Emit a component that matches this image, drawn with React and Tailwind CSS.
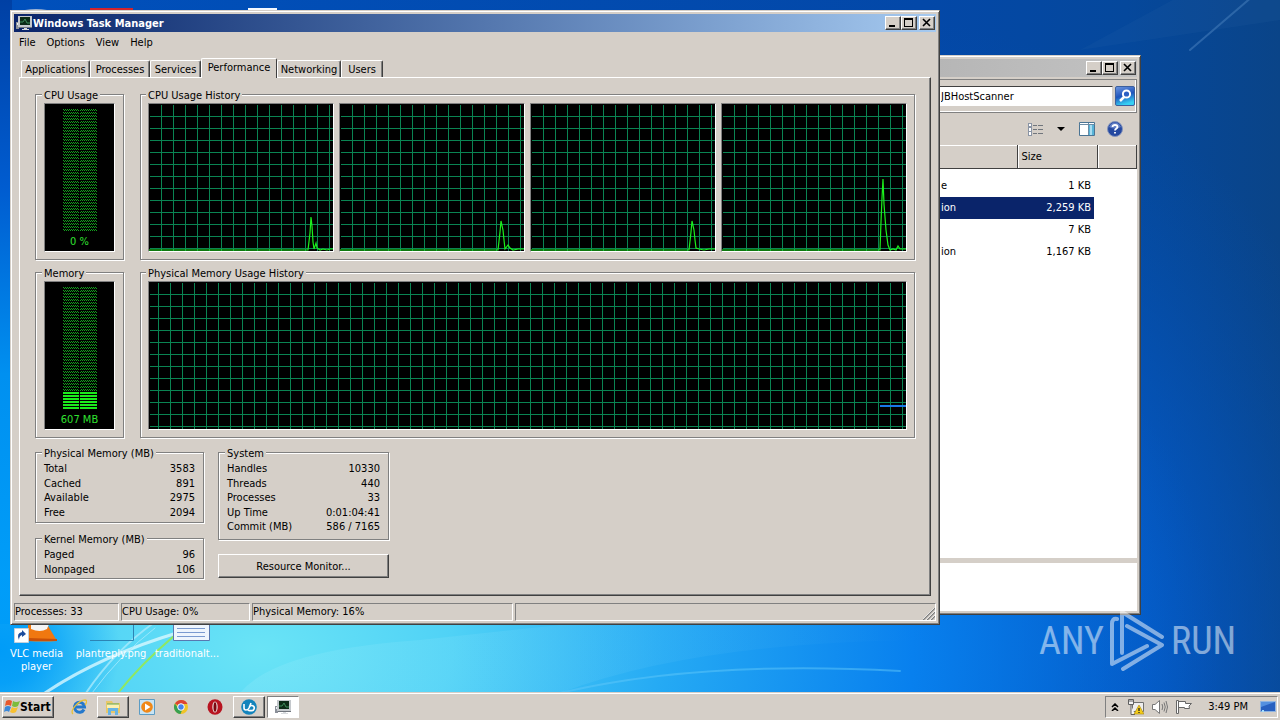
import React from 'react';

const raised =
  'border border-t-white border-l-white border-r-[#404040] border-b-[#404040] shadow-[inset_-1px_-1px_0_#808080]';
const frame =
  'border border-t-[#d5cfc8] border-l-[#d5cfc8] border-r-[#404040] border-b-[#404040] shadow-[inset_1px_1px_0_#fff,inset_-1px_-1px_0_#808080]';
const sunken = 'border border-t-[#808080] border-l-[#808080] border-r-white border-b-white';

function Wallpaper() {
  return (
    <svg className="absolute inset-0 h-full w-full" viewBox="0 0 1280 692" preserveAspectRatio="none" aria-hidden="true">
      <defs>
        <linearGradient id="base" x1="0" y1="0" x2="1" y2="0">
          <stop offset="0" stopColor="#0050bc" />
          <stop offset="0.72" stopColor="#0348a8" />
          <stop offset="0.88" stopColor="#05489c" />
          <stop offset="1" stopColor="#0a4488" />
        </linearGradient>
        <linearGradient id="leftEdge" x1="0" y1="0" x2="0" y2="1">
          <stop offset="0" stopColor="#0040a4" />
          <stop offset="0.3" stopColor="#005cd0" />
          <stop offset="0.6" stopColor="#0090f0" />
          <stop offset="1" stopColor="#00a0fa" />
        </linearGradient>
        <radialGradient id="glow" gradientUnits="userSpaceOnUse" cx="0" cy="0" r="1" gradientTransform="translate(260 650) scale(960 620)">
          <stop offset="0" stopColor="#6ae4f6" />
          <stop offset="0.2" stopColor="#50d2f6" />
          <stop offset="0.42" stopColor="#25aaf4" />
          <stop offset="0.68" stopColor="#0880ee" />
          <stop offset="1" stopColor="#0460cc" stopOpacity="0" />
        </radialGradient>
        <radialGradient id="leftFade" gradientUnits="userSpaceOnUse" cx="0" cy="0" r="1" gradientTransform="translate(0 650) scale(120 110)">
          <stop offset="0" stopColor="#009cf8" />
          <stop offset="0.3" stopColor="#009cf8" stopOpacity="0.9" />
          <stop offset="1" stopColor="#009cf8" stopOpacity="0" />
        </radialGradient>
        <radialGradient id="rightGlow" gradientUnits="userSpaceOnUse" cx="0" cy="0" r="1" gradientTransform="translate(900 660) scale(500 640)">
          <stop offset="0" stopColor="#0474e4" />
          <stop offset="0.5" stopColor="#045ccc" stopOpacity="0.85" />
          <stop offset="1" stopColor="#0450b0" stopOpacity="0" />
        </radialGradient>
        <linearGradient id="wash" x1="0" y1="0" x2="1" y2="0">
          <stop offset="0" stopColor="#bff4ff" stopOpacity="0.14" />
          <stop offset="1" stopColor="#bff4ff" stopOpacity="0" />
        </linearGradient>
      </defs>
      <rect width="1280" height="692" fill="url(#base)" />
      <rect width="1280" height="692" fill="url(#rightGlow)" />
      <rect width="1280" height="692" fill="url(#glow)" />
      <rect width="12" height="624" fill="url(#leftEdge)" />
      <rect y="540" width="120" height="152" fill="url(#leftFade)" />
      <g fill="none" strokeLinecap="round">
        <path d="M45 693Q100 656 180 632" stroke="#d8f8ff" strokeWidth="3" opacity="0.8" />
        <path d="M86 693Q115 650 155 622" stroke="#a8eafc" strokeWidth="2" opacity="0.8" />
        <path d="M92 693Q120 655 155 628" stroke="#a8eafc" strokeWidth="1" opacity="0.8" />
        <path d="M118 693Q140 665 174 636" stroke="#90e860" strokeWidth="2" />
        <path d="M560 693Q700 660 900 671" stroke="#60c8fa" strokeWidth="2" opacity="0.5" />
        <path d="M1190 50L1260 -10" stroke="#6ca0d8" strokeWidth="2" opacity="0.35" />
      </g>
      <path d="M240 693Q275 650 420 640L560 625H940V640Q700 640 560 693Z" fill="url(#wash)" />
      <path d="M1080 50L1180 -4H1280V20Z" fill="#3c74b0" opacity="0.1" />
      <path d="M25 10Q36 8 47 10Z" fill="#9fb4d4" />
      <path d="M90 8H133V11H90Z" fill="#d4242c" />
      <path d="M248 8H277V11H248Z" fill="#f4f8ff" />
    </svg>
  );
}

function MonitorIcon() {
  return (
    <svg className="size-4 shrink-0" viewBox="0 0 16 16" aria-hidden="true">
      <path d="M0 7H3V14H0Z" fill="#8b9099" />
      <path d="M1 8H2V10H1Z" fill="#e8edf2" />
      <path d="M2 1H16V12H2Z" fill="#c4c8cc" />
      <path d="M4 2H14V10H4Z" fill="#0b2a16" />
      <path d="M4 7H7L9 4L11 8H14" fill="none" stroke="#3d8a5a" />
      <path d="M8 12H11V14H13V15H6V14H8Z" fill="#d6d9dc" />
      <path d="M3 12H16V13H3Z" fill="#70757c" />
    </svg>
  );
}

function Caption({ kind }) {
  return (
    <button type="button" aria-label={kind} className={`flex h-[14px] w-4 items-center justify-center bg-[#d5cfc8] ${raised}`}>
      <svg className="h-[10px] w-3" viewBox="0 0 12 10" fill="none" stroke="#000" shapeRendering="crispEdges" aria-hidden="true">
        {kind === 'Minimize' && <path d="M2 8H8" strokeWidth="2" />}
        {kind === 'Maximize' && (
          <>
            <path d="M1 1H10" strokeWidth="2" />
            <path d="M1.500 1V8.500H9.500V1" />
          </>
        )}
        {kind === 'Close' && <path d="M2 1L9 8M9 1L2 8" strokeWidth="1.600" shapeRendering="auto" />}
      </svg>
    </button>
  );
}

function Captions() {
  return (
    <div className="ml-auto flex pr-px">
      <Caption kind="Minimize" />
      <Caption kind="Maximize" />
      <span className="w-0.5" />
      <Caption kind="Close" />
    </div>
  );
}

function Group({ title, className = '', children }) {
  return (
    <section className={`border border-[#808080] px-2 shadow-[1px_1px_0_#fff,inset_1px_1px_0_#fff] ${className}`}>
      <h2 className="-mt-[7px] -ml-0.5 w-fit bg-[#d5cfc8] px-0.5 leading-[15px] whitespace-nowrap">{title}</h2>
      {children}
    </section>
  );
}

function Meter({ id, label, lit }) {
  return (
    <div className={`flex h-[149px] flex-col items-center bg-black pt-[5px] ${sunken}`}>
      <svg className="h-[123px] w-[34px]" viewBox="0 0 34 123" shapeRendering="crispEdges" aria-hidden="true">
        <defs>
          <pattern id={`${id}-dim`} width="2" height="3" patternUnits="userSpaceOnUse">
            <path d="M0 0H1V1H0ZM1 1H2V2H1Z" fill="#12a01c" />
          </pattern>
          <pattern id={`${id}-lit`} width="3" height="3" patternUnits="userSpaceOnUse">
            <path d="M0 0H3V2H0Z" fill="#1cec1c" />
          </pattern>
        </defs>
        <rect width="34" height="123" fill={`url(#${id}-dim)`} />
        {lit > 0 && <rect y={123 - lit * 3} width="34" height={lit * 3} fill="#000" />}
        {lit > 0 && <rect y={123 - lit * 3} width="34" height={lit * 3} fill={`url(#${id}-lit)`} />}
        <path d="M16 0H17V123H16Z" fill="#000" />
      </svg>
      <span className="mt-0.5 leading-4 text-[#30e030]">{label}</span>
    </div>
  );
}

function Chart({ id, offset = 0, children }) {
  return (
    <div className={`h-[149px] min-w-0 flex-1 bg-black ${sunken}`}>
      <svg className="h-full w-full" aria-hidden="true">
        <defs>
          <pattern id={id} x={offset} width="12" height="12" patternUnits="userSpaceOnUse">
            <path d="M0 0H1V12H0ZM0 0H12V1H0Z" fill="#0a8452" />
          </pattern>
        </defs>
        <rect x="1" y="1" width="100%" height="100%" fill={`url(#${id})`} />
        {children}
      </svg>
    </div>
  );
}

const cpuHistory = [
  'M0 146H159L161 129L162 113L163 122L164 138L165 145L167 139L168 144L171 146L174 145L178 146L181 145H186',
  'M0 146H158L160 128L161 117L163 126L164 136L165 145L168 141L170 144L173 146L178 145H186',
  'M0 146H158L160 128L161 117L163 126L164 136L165 144L168 145L173 146L178 145H186',
  'M0 146H158L159 118L160 94L161 75L162 100L164 126L166 141L168 146L171 145L174 146L176 142L178 145H186',
];

function Stats({ rows }) {
  return (
    <dl>
      {rows.map(([name, value]) => (
        <div key={name} className="flex h-[15px] items-center justify-between even:h-[14px]">
          <dt>{name}</dt>
          <dd>{value}</dd>
        </div>
      ))}
    </dl>
  );
}

const tabs = [
  ['Applications', 'w-[69px]'],
  ['Processes', 'w-[60px]'],
  ['Services', 'w-[51px]'],
  ['Performance', 'w-[76px]'],
  ['Networking', 'w-[64px]'],
  ['Users', 'w-[42px]'],
];

function TaskManager() {
  return (
    <main className={`absolute top-[10px] left-[10px] w-[930px] bg-[#d5cfc8] p-[3px] ${frame}`}>
      <header className="flex h-[18px] items-center bg-linear-to-r from-[#0a246a] to-[#a6caf0] pl-0.5">
        <MonitorIcon />
        <h1 className="ml-px font-bold text-white">Windows Task Manager</h1>
        <Captions />
      </header>
      <nav className="flex h-5 items-center gap-[11px] pl-[5px]">
        {['File', 'Options', 'View', 'Help'].map((m) => (
          <button type="button" key={m}>{m}</button>
        ))}
      </nav>
      <div className="mt-1.5 flex h-[19px] items-end pl-[7px]" role="tablist">
        {tabs.map(([name, width]) => {
          const on = name === 'Performance';
          return (
            <button
              type="button"
              role="tab"
              aria-selected={on}
              key={name}
              className={`${width} rounded-t-xs border-t border-l border-white border-r border-r-[#404040] bg-[#d5cfc8] text-center ${
                on ? 'relative z-10 -mb-px h-5 pb-0.5' : 'h-[17px] shadow-[inset_-1px_0_0_#808080]'
              }`}
            >
              {name}
            </button>
          );
        })}
      </div>
      <div className="mx-[5px] flex flex-col border border-t-white border-l-white border-r-[#404040] border-b-[#404040] px-[15px] pt-4 pb-4 shadow-[inset_-1px_-1px_0_#808080]">
        <div className="grid grid-cols-[89px_minmax(0,1fr)] gap-x-4 gap-y-3">
          <Group title="CPU Usage" className="h-[166px]">
            <Meter id="cpu" label="0 %" lit={0} />
          </Group>
          <Group title="CPU Usage History" className="h-[166px] pr-[7px] pl-[7px]">
            <div className="flex gap-[5px]">
              {cpuHistory.map((d, i) => (
                <Chart key={d} id={`cpu-grid-${i}`}>
                  <path d={d} fill="none" stroke="#1cf01c" strokeWidth="1.200" />
                </Chart>
              ))}
            </div>
          </Group>
          <Group title="Memory" className="h-[166px]">
            <Meter id="mem" label="607 MB" lit={6} />
          </Group>
          <Group title="Physical Memory Usage History" className="h-[166px] pr-[7px] pl-[7px]">
            <div className="flex">
              <Chart id="mem-grid" offset={9}>
                <path d="M731 124H758" stroke="#1878e8" strokeWidth="2" />
              </Chart>
            </div>
          </Group>
        </div>
        <div className="mt-[14px] flex gap-[14px]">
          <div className="flex w-[169px] flex-col gap-[15px]">
            <Group title="Physical Memory (MB)" className="h-[71px]">
              <Stats rows={[['Total', '3583'], ['Cached', '891'], ['Available', '2975'], ['Free', '2094']]} />
            </Group>
            <Group title="Kernel Memory (MB)" className="h-[41px]">
              <Stats rows={[['Paged', '96'], ['Nonpaged', '106']]} />
            </Group>
          </div>
          <div className="flex w-[171px] flex-col gap-[14px]">
            <Group title="System" className="h-[88px]">
              <Stats
                rows={[
                  ['Handles', '10330'],
                  ['Threads', '440'],
                  ['Processes', '33'],
                  ['Up Time', '0:01:04:41'],
                  ['Commit (MB)', '586 / 7165'],
                ]}
              />
            </Group>
            <button type="button" className={`h-6 ${raised}`}>Resource Monitor...</button>
          </div>
        </div>
      </div>
      <footer className="mt-[7px] flex h-[18px] gap-0.5 leading-4">
        <span className={`w-[105px] ${sunken}`}>Processes: 33</span>
        <span className={`w-[129px] ${sunken}`}>CPU Usage: 0%</span>
        <span className={`w-[261px] ${sunken}`}>Physical Memory: 16%</span>
        <span className={`flex flex-1 items-end justify-end ${sunken}`}>
          <svg className="size-3" viewBox="0 0 12 12" aria-hidden="true">
            <path d="M0 12L12 0M4 12L12 4M8 12L12 8" stroke="#808080" strokeWidth="1.500" />
            <path d="M-1 12L12 -1M3 12L12 3M7 12L12 7" stroke="#fff" strokeWidth="0.700" />
          </svg>
        </span>
      </footer>
    </main>
  );
}

const files = [
  ['e', '1 KB'],
  ['ion', '2,259 KB'],
  ['', '7 KB'],
  ['ion', '1,167 KB'],
];

function Explorer() {
  return (
    <section className={`absolute top-[55px] left-[900px] flex w-[241px] flex-col bg-[#d5cfc8] p-[3px] ${frame}`} aria-label="File browser">
      <header className="flex h-[18px] items-center bg-linear-to-r from-[#b4b4b4] to-[#c2c2c2]">
        <Captions />
      </header>
      <div className="mt-0.5 flex h-[34px] items-center gap-0.5 border border-[#808080] pr-px pl-[30px] shadow-[inset_-1px_-1px_0_#fff]">
        <input
          aria-label="Address"
          defaultValue="JBHostScanner"
          className="h-[21px] min-w-0 flex-1 border border-t-[#404040] border-l-[#808080] border-r-[#d5cfc8] border-b-[#d5cfc8] bg-white pl-[5px] outline-none"
        />
        <button type="button" aria-label="Search">
          <svg className="size-5" viewBox="0 0 20 20" aria-hidden="true">
            <defs>
              <linearGradient id="go" x1="0" y1="0" x2="0.300" y2="1">
                <stop offset="0" stopColor="#6f98e0" />
                <stop offset="0.550" stopColor="#1f54bc" />
                <stop offset="1" stopColor="#35d0f4" />
              </linearGradient>
            </defs>
            <rect x="0.500" y="0.500" width="19" height="19" rx="1.500" fill="url(#go)" stroke="#3c5f9c" />
            <circle cx="11.500" cy="8" r="3.600" fill="#2c60c4" stroke="#fff" strokeWidth="2" />
            <path d="M9 11L5 15" stroke="#fff" strokeWidth="2.500" />
          </svg>
        </button>
      </div>
      <div className="flex h-8 items-center justify-end pr-[14px]">
        <button type="button" aria-label="Change view" className="mr-[14px]">
          <svg className="h-[13px] w-4" viewBox="0 0 16 13" fill="none" shapeRendering="crispEdges" aria-hidden="true">
            <path d="M1.500 0.500H4.500V3.500H1.500ZM1.500 4.500H4.500V8.500H1.500ZM1.500 8.500H4.500V12.500H1.500Z" fill="#fff" stroke="#8a94a4" />
            <path d="M6 2.500H10M11 2.500H16M6 6.500H10M11 6.500H16M6 10.500H10M11 10.500H16" stroke="#70757c" />
          </svg>
        </button>
        <button type="button" aria-label="View options" className="mr-[14px]">
          <svg className="h-1 w-2" viewBox="0 0 8 4" aria-hidden="true"><path d="M0 0H8L4 4Z" /></svg>
        </button>
        <button type="button" aria-label="Preview pane" className="mr-3">
          <svg className="h-[14px] w-4" viewBox="0 0 16 14" aria-hidden="true">
            <path d="M0.500 0.500H15.500V13.500H0.500Z" fill="#fff" stroke="#4a7494" />
            <path d="M9 3H15V13H9Z" fill="#58b4d8" />
            <path d="M11 3H13V13H11Z" fill="#a8dcf0" />
            <path d="M0.500 2.500H15.500M9.500 1V13" stroke="#6b8ca6" />
          </svg>
        </button>
        <button type="button" aria-label="Help">
          <svg className="size-4" viewBox="0 0 16 16" aria-hidden="true">
            <circle cx="8" cy="8" r="7.500" fill="#2448a0" stroke="#8494bc" />
            <path d="M2 6Q4 1.500 8 1.500T14 6Q8 9 2 6Z" fill="#7d96d4" opacity="0.700" />
            <path d="M5.500 6Q5.500 4 8 4T10.500 6C10.500 7.500 8 7.500 8 9.500M8 11V12.500" fill="none" stroke="#fff" strokeWidth="1.800" />
          </svg>
        </button>
      </div>
      <div className="h-[413px] bg-white">
        <table className="w-full table-fixed border-collapse">
          <thead>
            <tr className="h-[23px] bg-[#d5cfc8] text-left">
              <th aria-label="Type" className="w-[113px] border-r border-b border-[#404040] shadow-[inset_0_1px_0_#fff]" />
              <th className="w-20 border-r border-b border-[#404040] pl-1 font-normal shadow-[inset_1px_1px_0_#fff]">Size</th>
              <th aria-label="More" className="border-r border-b border-[#404040] shadow-[inset_1px_1px_0_#fff]" />
            </tr>
          </thead>
        </table>
        <table className="mt-1.5 w-[190px] table-fixed border-collapse">
          <tbody>
            {files.map(([type, size], i) => (
              <tr key={size} className={`h-[22px] ${i === 1 ? 'bg-[#0a246a] text-white' : ''}`}>
                <td className="w-[114px] pl-[37px]">{type}</td>
                <td className="pr-[3px] text-right">{size}</td>
              </tr>
            ))}
          </tbody>
        </table>
      </div>
      <div className="mt-[5px] h-12 bg-white" />
    </section>
  );
}

function DesktopIcons() {
  return (
    <ul className="absolute top-[620px] left-0 flex text-center leading-[13px] text-white">
      <li className="flex w-[73px] flex-col items-center">
        <svg className="h-[27px] w-12" viewBox="0 0 48 27" aria-hidden="true">
          <path d="M15 4H34L44 21Q30 22 15 21Z" fill="#f07810" />
          <path d="M18 4H36L34 9Q27 13 18 9Z" fill="#f4f4f4" />
          <path d="M15 18L44 19V21H15Z" fill="#c85008" />
          <path d="M1.500 8.500H15.500V22.500H1.500Z" fill="#fff" stroke="#c4d0dc" />
          <path d="M6 20Q3 13 9 12V10L13 14L9 17V15Q6 16 6 20Z" fill="#1c4c9c" />
        </svg>
        <span className="w-14">VLC media player</span>
      </li>
      <li className="flex w-[76px] flex-col items-center">
        <svg className="h-[27px] w-12" viewBox="0 0 48 27" aria-hidden="true"><path d="M3 20.500H46.500V3" fill="none" stroke="#2c84b4" /></svg>
        <span>plantreply.png</span>
      </li>
      <li className="flex w-[76px] flex-col items-center">
        <svg className="h-[27px] w-12" viewBox="0 0 48 27" aria-hidden="true">
          <path d="M10.500 0.500H46.500V20.500H10.500Z" fill="#eef5fd" stroke="#5878b0" />
          <path d="M14 8.500H42M14 12.500H42M14 16.500H42" stroke="#7a9ad0" />
        </svg>
        <span>traditionalt...</span>
      </li>
    </ul>
  );
}

function Watermark() {
  return (
    <div className="absolute top-[609px] left-[1039px] flex items-center gap-[6px] text-[38px] leading-[64px] text-white opacity-50" aria-label="ANY RUN">
      <span className="w-[64px] text-right font-['Roboto_Condensed','Liberation_Sans_Narrow','Liberation_Sans',sans-serif]">ANY</span>
      <svg className="h-[64px] w-[56px]" viewBox="0 0 56 64" fill="none" stroke="#fff" strokeWidth="4" strokeLinecap="round" strokeLinejoin="round" aria-hidden="true">
        <path d="M8 10Q3 9 3 15V55L38 37M13 44V3L53 28M18 17L53 36L14 60" />
      </svg>
      <span className="font-['Roboto_Condensed','Liberation_Sans_Narrow','Liberation_Sans',sans-serif]">RUN</span>
    </div>
  );
}

function WindowsFlag() {
  return (
    <svg className="h-[15px] w-4" viewBox="0 0 16 15" aria-hidden="true">
      <path d="M2 2Q5 0 8 2L7 7Q4 5 1 7Z" fill="#e8582c" />
      <path d="M9 2Q12 4 16 2L14 7Q11 9 8 7Z" fill="#7cbc3c" />
      <path d="M1 8Q4 6 7 8L5 13Q3 11 0 13Z" fill="#3c88d8" />
      <path d="M8 8Q11 10 14 8L12 13Q9 15 6 13Z" fill="#f8c030" />
    </svg>
  );
}

const apps = [
  {
    name: 'Internet Explorer',
    icon: (
      <>
        <path d="M13 10.500A5 5 0 1 1 13.500 8H5" fill="none" stroke="#2478cc" strokeWidth="3" />
        <path d="M2 15C-2 12 8 1 14 1C17 1 15 5 14 6" fill="none" stroke="#e8c038" strokeWidth="1.300" />
      </>
    ),
  },
  {
    name: 'Windows Explorer',
    box: 'raised',
    icon: (
      <>
        <path d="M1 2H7L8 4H15V14H1Z" fill="#e8c868" />
        <path d="M2 5H14V9H2Z" fill="#fcf0b0" />
        <path d="M3 16V9H13V16H10V12H6V16Z" fill="#68b4e4" />
        <path d="M2 5L14 5" stroke="#60a860" />
      </>
    ),
  },
  {
    name: 'Media Player',
    icon: (
      <>
        <path d="M0.500 0.500H15.500V15.500H0.500Z" fill="#c8e4f4" stroke="#5c9cc4" />
        <circle cx="8" cy="8" r="5.800" fill="#f08818" />
        <path d="M6 4.500L11.500 8L6 11.500Z" fill="#fff" />
      </>
    ),
  },
  {
    name: 'Chrome',
    icon: (
      <>
        <circle cx="8" cy="8" r="7" fill="#f0c428" />
        <path d="M8 8L2 4.500A7 7 0 0 1 14.500 5H8Z" fill="#dc4434" />
        <path d="M1.900 4.500A7 7 0 0 0 7.500 15L10 9H5Z" fill="#38a050" />
        <circle cx="8" cy="8" r="3.300" fill="#4484ec" stroke="#fff" />
      </>
    ),
  },
  {
    name: 'Opera',
    icon: (
      <>
        <ellipse cx="8" cy="8" rx="7.500" ry="7.800" fill="#b81420" />
        <ellipse cx="8" cy="8" rx="2.700" ry="5.500" fill="#e8dcd8" />
        <ellipse cx="8" cy="8" rx="1.500" ry="4.800" fill="#7c0810" />
      </>
    ),
  },
  {
    name: 'USB Scanner',
    box: 'raised',
    icon: (
      <>
        <circle cx="8" cy="8" r="7.800" fill="#1484bc" />
        <path d="M3 5V9Q3 11 5 11T8 9L10 4M7 11Q8 12 10 11.500A2.500 2.500 0 1 0 8.500 8" fill="none" stroke="#fff" strokeWidth="1.600" />
      </>
    ),
  },
];

function Taskbar() {
  return (
    <footer className="relative flex h-7 shrink-0 items-center border-t border-[#d5cfc8] bg-[#d5cfc8] pr-0.5 pl-0.5 shadow-[inset_0_1px_0_#fff]">
      <button type="button" className={`flex h-[22px] w-[52px] items-center pl-px text-xs font-bold ${raised}`}>
        <WindowsFlag />
        Start
      </button>
      <nav className="ml-[9px] flex items-center gap-0.5">
        {apps.map(({ name, box, icon }) => (
          <button type="button" key={name} aria-label={name} className={`flex h-[22px] w-8 items-center justify-center ${box ? raised : ''}`}>
            <svg className="size-4" viewBox="0 0 16 16" aria-hidden="true">{icon}</svg>
          </button>
        ))}
        <button type="button" aria-label="Task Manager" className={`flex h-[22px] w-8 items-center justify-center bg-white ${sunken}`}>
          <MonitorIcon />
        </button>
      </nav>
      <div className={`ml-auto flex h-[22px] items-center pr-px pl-[5px] ${sunken}`}>
        <svg className="h-2 w-2" viewBox="0 0 8 8" fill="none" stroke="#000" strokeWidth="1.500" aria-hidden="true"><path d="M1 4L4 1L7 4M1 8L4 5L7 8" /></svg>
        <svg className="ml-[9px] size-4" viewBox="0 0 16 16" aria-hidden="true">
          <path d="M4.500 3.500H15.500V12.500H4.500Z" fill="#eee" stroke="#707070" />
          <path d="M0.500 0.500H5.500V5.500H0.500ZM3 6V15.500H7M2 0V3M4 0V3" fill="#f4f4f4" stroke="#606060" />
          <path d="M11 6L16 15H6Z" fill="#f4cc18" stroke="#a48410" strokeWidth="0.600" />
          <path d="M11 9V12M11 13V14" stroke="#222" strokeWidth="1.300" />
        </svg>
        <svg className="ml-2 h-[14px] w-4" viewBox="0 0 16 14" fill="none" stroke="#777" aria-hidden="true">
          <path d="M0.500 4.500H3L7.500 0.500V13.500L3 9.500H0.500Z" fill="#fff" />
          <path d="M10 4Q11.500 7 10 10M12 2.500Q14.500 7 12 11.500M14 1Q17 7 14 13" />
        </svg>
        <svg className="ml-2 h-[14px] w-4" viewBox="0 0 16 14" fill="#fff" stroke="#666" aria-hidden="true">
          <path d="M0.500 0.500H2.500V13.500H0.500ZM2.500 1.500H9.500V3.500H15.500L13 6L13.500 8.500H8.500V7.500H2.500Z" />
        </svg>
        <time className="ml-4">3:49 PM</time>
        <svg className="ml-3 h-3 w-4" viewBox="0 0 16 12" aria-hidden="true">
          <path d="M0.500 0.500H15.500V10.500H0.500Z" fill="#2860c0" stroke="#90b4e0" />
          <path d="M1 1H15L1 6Z" fill="#5490e0" />
          <path d="M2 9H4V11H2Z" fill="#a4e0ff" />
        </svg>
      </div>
    </footer>
  );
}

export default function App() {
  return (
    <div className="flex min-h-screen flex-col overflow-hidden bg-[#0458c0] font-['DejaVu_Sans_Condensed','Noto_Sans',sans-serif] text-[11px] leading-[15px] text-black">
      <div className="relative flex-1 overflow-hidden">
        <Wallpaper />
        <DesktopIcons />
        <Explorer />
        <TaskManager />
        <Watermark />
      </div>
      <Taskbar />
    </div>
  );
}
